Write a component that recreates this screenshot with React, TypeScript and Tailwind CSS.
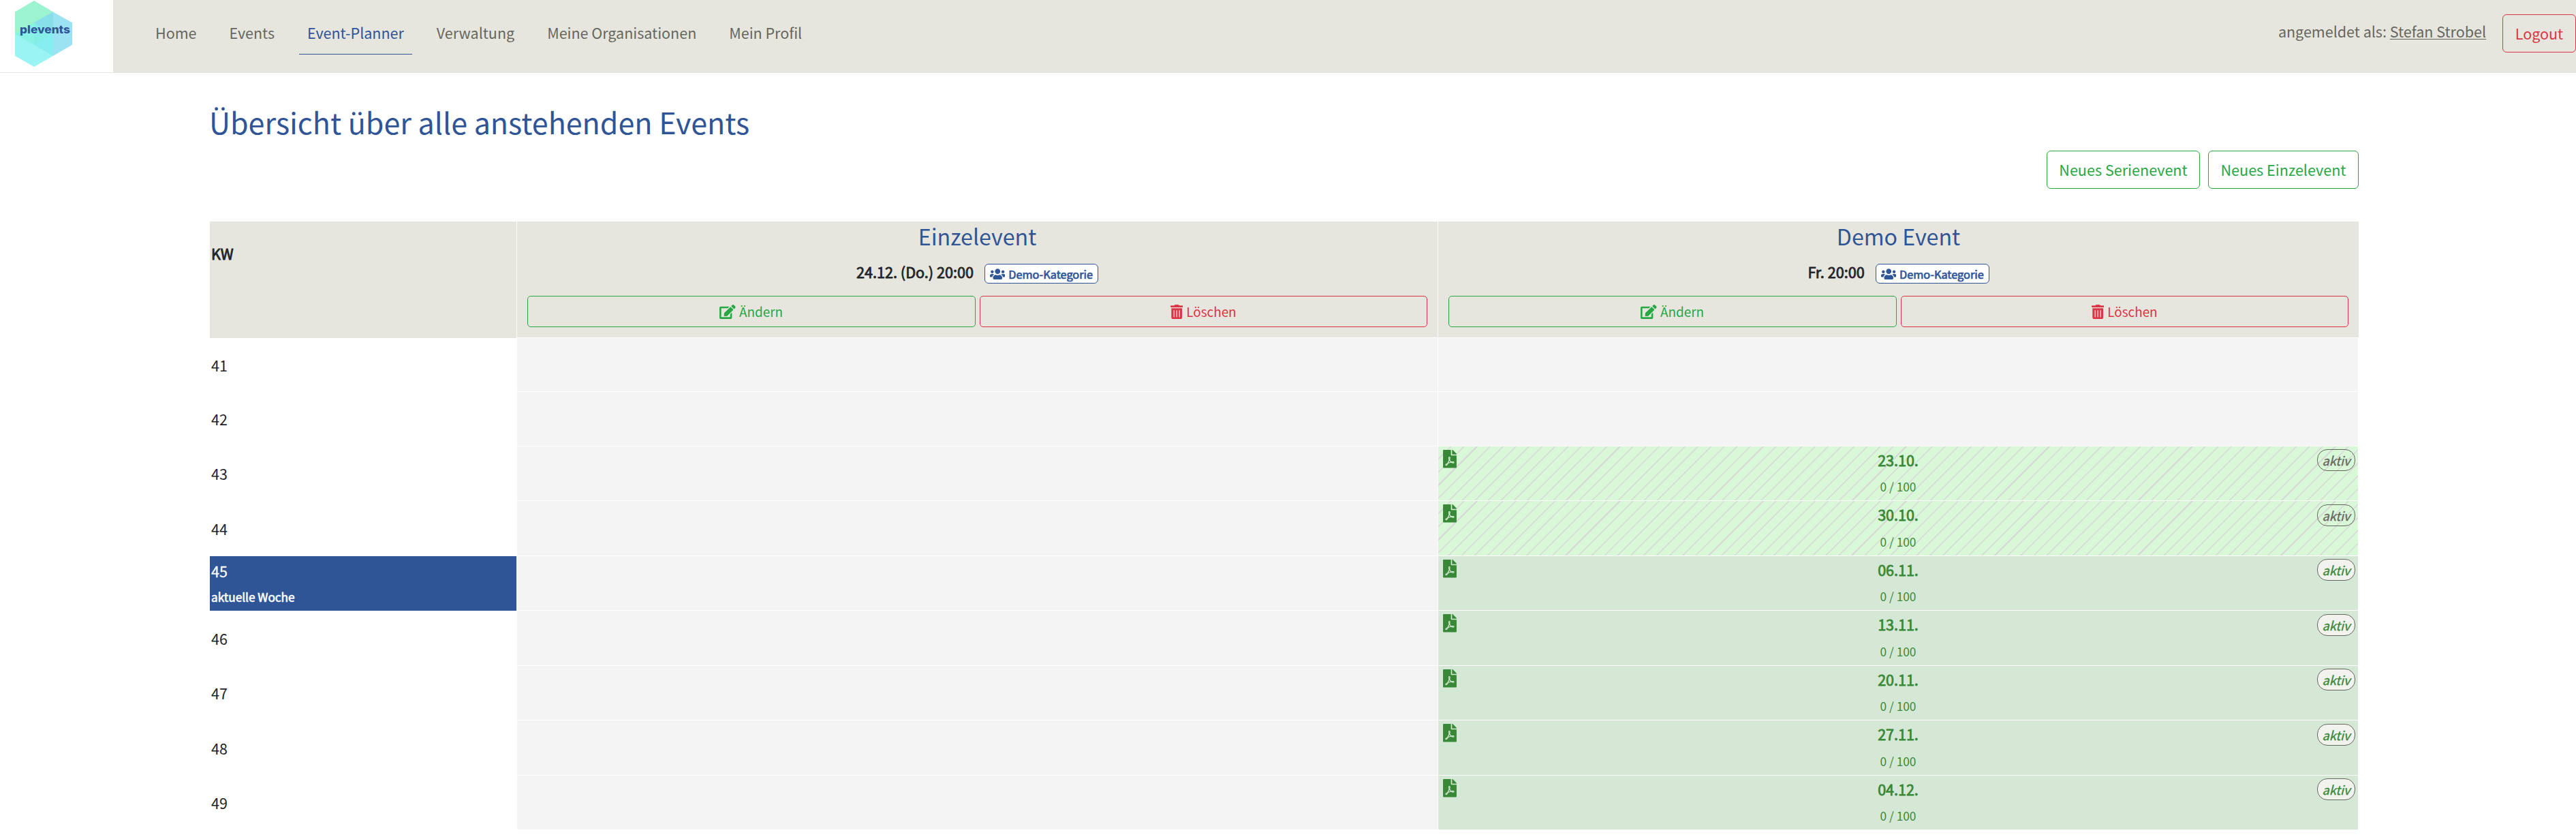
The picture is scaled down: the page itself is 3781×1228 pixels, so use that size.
import { FaEdit, FaFilePdf, FaTrashAlt, FaUsers } from "react-icons/fa";

const NAV = ["Home", "Events", "Event-Planner", "Verwaltung", "Meine Organisationen", "Mein Profil"];

type Week = { kw: number; height: string; tall?: boolean; current?: boolean; date?: string; past?: boolean };

const WEEKS: Week[] = [
  { kw: 41, height: "h-[79px]" },
  { kw: 42, height: "h-20" },
  { kw: 43, height: "h-20", date: "23.10.", past: true },
  { kw: 44, height: "h-[81px]", tall: true, date: "30.10.", past: true },
  { kw: 45, height: "h-20", date: "06.11.", current: true },
  { kw: 46, height: "h-[81px]", tall: true, date: "13.11." },
  { kw: 47, height: "h-20", date: "20.11." },
  { kw: 48, height: "h-[81px]", tall: true, date: "27.11." },
  { kw: 49, height: "h-20", date: "04.12." },
];

/* Diagonal hatching for past events; every eleventh line is heavier. */
function Hatch() {
  return (
    <svg className="absolute inset-0 h-full w-full" stroke="#d8d4d8">
      {Array.from({ length: 75 }, (_, i) => {
        const x = 18.8 + i * 19.09;
        return <line key={i} x1={x + 2} y1={-2} x2={x - 82} y2={82} strokeWidth={i % 11 === 2 ? 2 : 1.35} />;
      })}
    </svg>
  );
}

function Logo() {
  return (
    <svg className="block h-[106px] w-[166px]" viewBox="0 0 166 106">
      <polygon points="50,33.3 78,50 78,82 50,98 22,82 22,50" fill="#9bf4f4" />
      <polygon points="50,1 78,17.4 78,50 50,65.7 22,50 22,17.4" fill="#9bf3cf" />
      <polygon points="78,17.4 106,33.3 106,65.7 78,82 50,65.7 50,33.3" fill="#9be3f3" />
      <polygon points="78,17.4 78,50 50,33.3" fill="#88dfea" />
      <polygon points="22,50 50,33.3 50,65.7" fill="#88f2e4" />
      <polygon points="50,33.3 78,50 50,65.7" fill="#84ede8" />
      <polygon points="78,50 78,82 50,65.7" fill="#86eef1" />
      <text
        x="29"
        y="49"
        textLength="74"
        lengthAdjust="spacingAndGlyphs"
        fill="#2f5597"
        className="font-['Inter',sans-serif] text-[16.5px] font-extrabold"
      >
        plevents
      </text>
    </svg>
  );
}

function EventHead({ title, when }: { title: string; when: string }) {
  return (
    <div className="flex h-[171px] flex-col border-b border-white bg-[#e6e6de] px-[15px]">
      <h2 className="text-center text-[32.2px] leading-[43px] text-[#2f5597]">{title}</h2>
      <div className="mt-[13px] flex h-[53px] items-start justify-center gap-4">
        <span className="text-[21.6px] leading-9 text-[#212529] [-webkit-text-stroke:0.8px]">{when}</span>
        <span className="mt-[6px] flex h-[29px] w-[167px] items-center justify-center gap-[5px] rounded-md border border-[#2f5597] bg-white text-[16.3px] text-[#2f5597]">
          <FaUsers className="h-[18px] w-[22.5px]" />
          <span className="leading-[26px] [-webkit-text-stroke:0.7px]">Demo-Kategorie</span>
        </span>
      </div>
      <div className="flex h-[46px] gap-[6px] text-[18.9px] leading-[44px]">
        <button className="flex flex-1 items-center justify-center gap-[5px] rounded-[5px] border border-[#28a745] text-[#28a745]">
          <FaEdit className="h-[21px] w-[23.6px]" />
          Ändern
        </button>
        <button className="flex flex-1 items-center justify-center gap-[5px] rounded-[5px] border border-[#dc3545] text-[#dc3545]">
          <FaTrashAlt className="h-[21px] w-[18.4px]" />
          Löschen
        </button>
      </div>
    </div>
  );
}

function KwCell({ week }: { week: Week }) {
  if (week.current) {
    return (
      <div className="border-r border-white">
        <div className="flex h-full flex-col bg-[#2f5597] px-[2px] pt-1 text-white">
          <span className="text-[21.5px] leading-9 [-webkit-text-stroke:0.3px]">{week.kw}</span>
          <span className="mt-[5px] text-[17.2px] leading-[29px] [-webkit-text-stroke:0.6px]">aktuelle Woche</span>
        </div>
      </div>
    );
  }
  return <div className="flex items-center px-[2px] text-[21.5px] leading-9 text-[#212529]">{week.kw}</div>;
}

function DateCell({ week }: { week: Week }) {
  if (!week.date) return <div className="mr-px border-b border-white bg-[#f4f4f4]" />;
  return (
    <div className="mr-px border-b border-white">
      <div className={`relative h-full overflow-hidden text-[#388838] ${week.past ? "bg-[#d8f8d8]" : "bg-[#d5e8d5]"}`}>
        {week.past && <Hatch />}
        <div className="relative flex h-full flex-col items-center pt-[2px]">
          <FaFilePdf className="absolute top-[5px] left-[7px] h-[26.5px] w-5" />
          <span className="text-[21.5px] leading-9 [-webkit-text-stroke:0.8px]">{week.date}</span>
          <span className={`text-[17.3px] leading-[29px] ${week.tall ? "mt-[7px]" : "mt-[6px]"}`}>0 / 100</span>
          <span
            className={`absolute right-1 flex h-8 w-14 items-center justify-center rounded-[15px] border border-[#666660] text-[18.2px] leading-[29px] italic [-webkit-text-stroke:0.3px] ${
              week.tall ? "top-[5px]" : "top-1"
            } ${week.past ? "text-[#666660]" : "bg-[#f2f2ee]"}`}
          >
            aktiv
          </span>
        </div>
      </div>
    </div>
  );
}

export default function App() {
  return (
    <div className="h-[1228px] w-[3781px] overflow-hidden bg-white font-['Noto_Sans_CJK_SC',sans-serif]">
      <header className="flex h-[107px] items-start bg-[#e6e6de] text-[21.5px] leading-9 text-[#666660]">
        <div className="h-[106px] w-[166px] bg-white">
          <Logo />
        </div>
        <nav className="ml-[50px] flex gap-6 pt-[30px]">
          {NAV.map((item) => (
            <a
              key={item}
              className={`border-b px-3 pb-[13px] whitespace-nowrap ${
                item === "Event-Planner" ? "border-[#2f5597] text-[#2f5597]" : "border-transparent"
              }`}
            >
              {item}
            </a>
          ))}
        </nav>
        <div className="ml-auto flex items-start gap-6">
          <p className="mt-7 whitespace-pre">
            angemeldet als: <a className="underline decoration-1 underline-offset-2">Stefan Strobel</a>
          </p>
          <button className="mt-[21px] h-14 w-[108px] rounded-md border border-[#dc3545] text-[#dc3545]">Logout</button>
        </div>
      </header>

      <main className="mx-[308px] w-[3154px]">
        <h1 className="-ml-px pt-[42px] text-[43px] leading-[58px] text-[#2f5597]">
          Übersicht über alle anstehenden Events
        </h1>
        <div className="mt-[14px] flex justify-end gap-3 text-[21.6px] leading-9 text-[#28a745]">
          <button className="h-14 w-[225px] rounded-md border border-[#28a745]">Neues Serienevent</button>
          <button className="h-14 w-[221px] rounded-md border border-[#28a745]">Neues Einzelevent</button>
        </div>

        <section className="mt-12">
          <div className="grid grid-cols-[451px_1352px_1351px]">
            <div className="mr-px h-[171px] bg-[#e6e6de] px-[2px] pt-[29px] text-[21.5px] leading-9 text-[#212529] [-webkit-text-stroke:0.9px]">
              KW
            </div>
            <div className="pr-px">
              <EventHead title="Einzelevent" when="24.12. (Do.) 20:00" />
            </div>
            <EventHead title="Demo Event" when="Fr. 20:00" />
          </div>
          {WEEKS.map((week) => (
            <div key={week.kw} className={`grid grid-cols-[451px_1352px_1351px] ${week.height}`}>
              <KwCell week={week} />
              <div className="mr-px border-b border-white bg-[#f4f4f4]" />
              <DateCell week={week} />
            </div>
          ))}
        </section>
      </main>
    </div>
  );
}
